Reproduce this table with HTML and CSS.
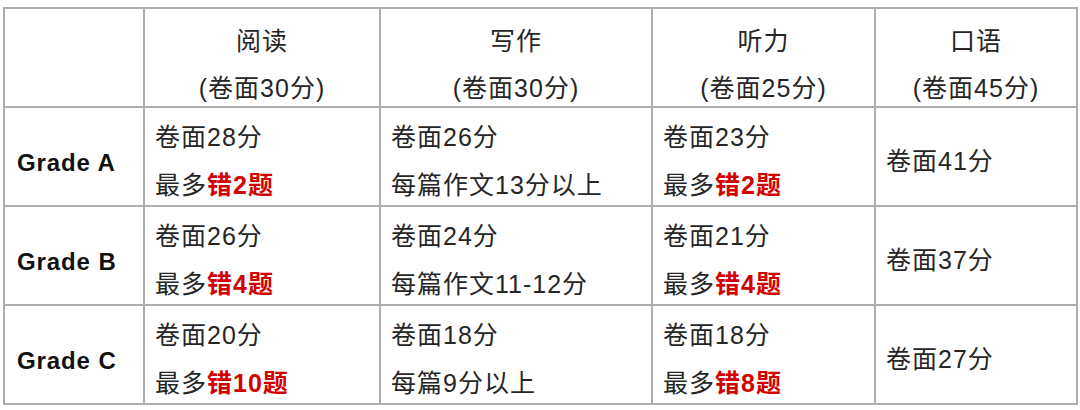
FILE: index.html
```html
<!DOCTYPE html>
<html lang="zh-CN">
<head>
<meta charset="utf-8">
<title>Grades</title>
<link rel="stylesheet" href="styles.css">
</head>
<body>
<div class="page">
  <div class="grid">
    <div class="cell head"></div>
    <div class="cell head"><span>阅读</span><span>(卷面30分)</span></div>
    <div class="cell head"><span>写作</span><span>(卷面30分)</span></div>
    <div class="cell head"><span>听力</span><span>(卷面25分)</span></div>
    <div class="cell head"><span>口语</span><span>(卷面45分)</span></div>

    <div class="cell body grade">Grade A</div>
    <div class="cell body"><span>卷面28分</span><span>最多<b class="red">错2题</b></span></div>
    <div class="cell body"><span>卷面26分</span><span>每篇作文13分以上</span></div>
    <div class="cell body"><span>卷面23分</span><span>最多<b class="red">错2题</b></span></div>
    <div class="cell body"><span>卷面41分</span></div>

    <div class="cell body grade">Grade B</div>
    <div class="cell body"><span>卷面26分</span><span>最多<b class="red">错4题</b></span></div>
    <div class="cell body"><span>卷面24分</span><span>每篇作文11-12分</span></div>
    <div class="cell body"><span>卷面21分</span><span>最多<b class="red">错4题</b></span></div>
    <div class="cell body"><span>卷面37分</span></div>

    <div class="cell body grade">Grade C</div>
    <div class="cell body"><span>卷面20分</span><span>最多<b class="red">错10题</b></span></div>
    <div class="cell body"><span>卷面18分</span><span>每篇9分以上</span></div>
    <div class="cell body"><span>卷面18分</span><span>最多<b class="red">错8题</b></span></div>
    <div class="cell body"><span>卷面27分</span></div>
  </div>
</div>
</body>
</html>
```

FILE: styles.css
```css
html, body {
  margin: 0;
  padding: 0;
  background: #ffffff;
}

.page {
  width: 1080px;
  height: 410px;
  padding: 7px 0 0 3px;
  box-sizing: border-box;
}

.grid {
  display: grid;
  grid-template-columns: 140px 236px 272px 223px 202px;
  grid-template-rows: 99px 99px 99px 99px;
  border-top: 2px solid #adadad;
  border-left: 2px solid #adadad;
  width: max-content;
  font-family: "Liberation Sans", "Noto Sans CJK SC", sans-serif;
  font-size: 25px;
  letter-spacing: 1px;
  color: #262626;
}

.cell {
  box-sizing: border-box;
  border-right: 2px solid #adadad;
  border-bottom: 2px solid #adadad;
  display: flex;
  flex-direction: column;
}

.head {
  align-items: center;
  justify-content: flex-start;
  padding-top: 9px;
  line-height: 47px;
}

.body {
  justify-content: center;
  padding-left: 10px;
  padding-top: 9px;
  line-height: 48px;
}

.grade {
  font-weight: bold;
  font-size: 24px;
  letter-spacing: 0.9px;
  color: #111111;
  padding-left: 12px;
  padding-top: 12px;
}

.red {
  color: #d40000;
  font-weight: bold;
}
```
